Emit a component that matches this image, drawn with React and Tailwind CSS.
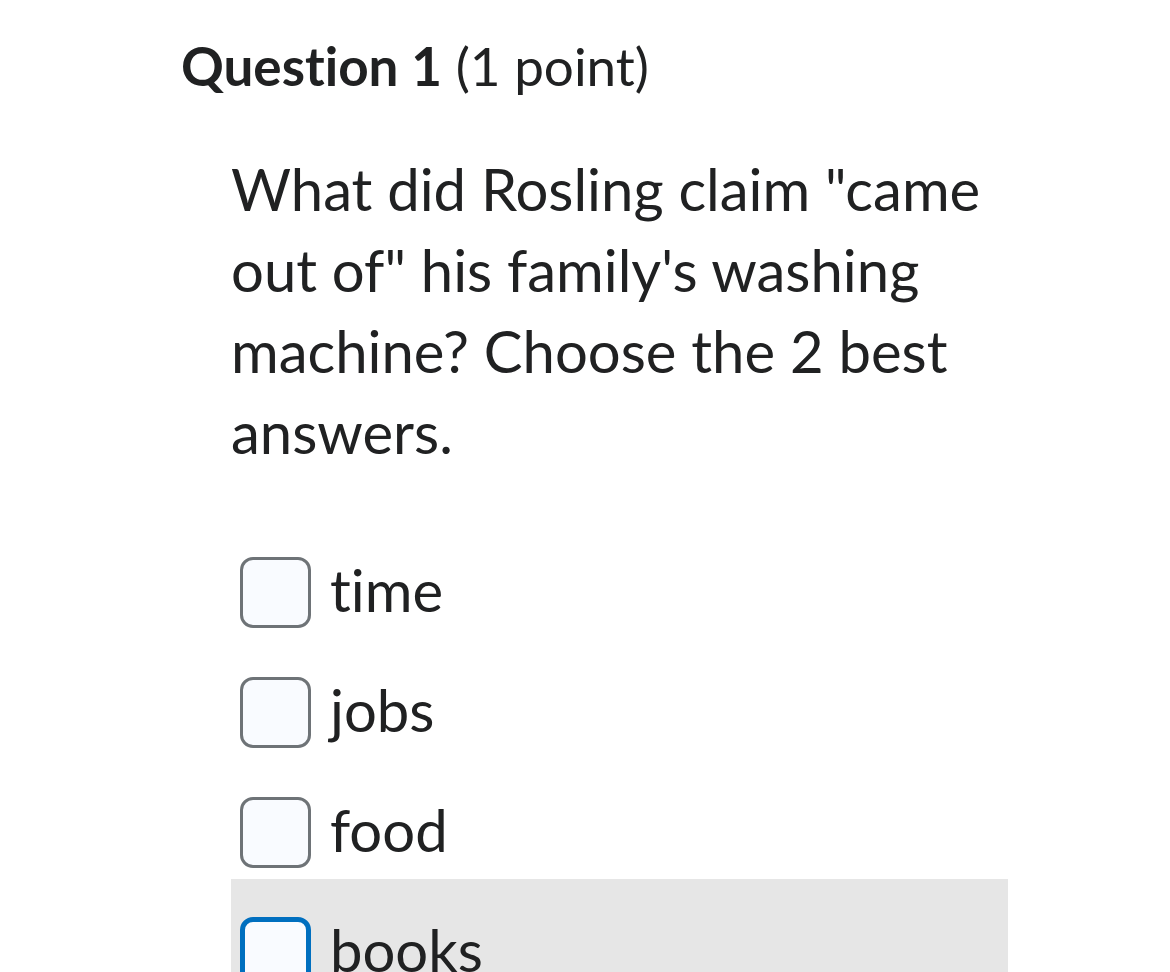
import { useState } from "react"

const options = ["time", "jobs", "food", "books"]

function Checkbox({ focused }) {
  return (
    <span
      className={`
        block shrink-0 w-[71px] h-[71px] rounded-[13px] bg-[#f9fbff]
        ${focused ? "border-[5px] border-[#006fbf]" : "border-[3px] border-[#6e7377]"}
      `}
    />
  )
}

export default function App() {
  const [checked] = useState({})

  return (
    <div
      className="min-h-screen bg-white text-[#202122] pl-[181px] pt-[34px] [font-variant-ligatures:none]"
      style={{ fontFamily: "Lato, 'Noto Sans', sans-serif" }}
    >

      {/* Heading */}
      <h2 className="text-[53px] leading-[64px]">
        <span className="font-bold">Question 1</span> (1 point)
      </h2>

      {/* Question */}
      <div className="ml-[50px] w-[777px] mt-[50px]">

        <p className="text-[58px] leading-[81px]">
          What did Rosling claim "came out of" his family's washing machine? Choose the 2 best answers.
        </p>

        <div className="mt-[47px]">
          {options.map((o, i) => (
            <label
              key={o}
              className={`
                flex items-center h-[120px] pt-[38px] pb-[12px] pl-[9px] gap-[19px]
                ${i === 3 ? "bg-[#e6e6e6]" : ""}
              `}
            >
              <Checkbox focused={i === 3} checked={checked[o]} />
              <span className="text-[58px] leading-[70px] -mt-[4px]">{o}</span>
            </label>
          ))}
        </div>

      </div>

    </div>
  )
}
